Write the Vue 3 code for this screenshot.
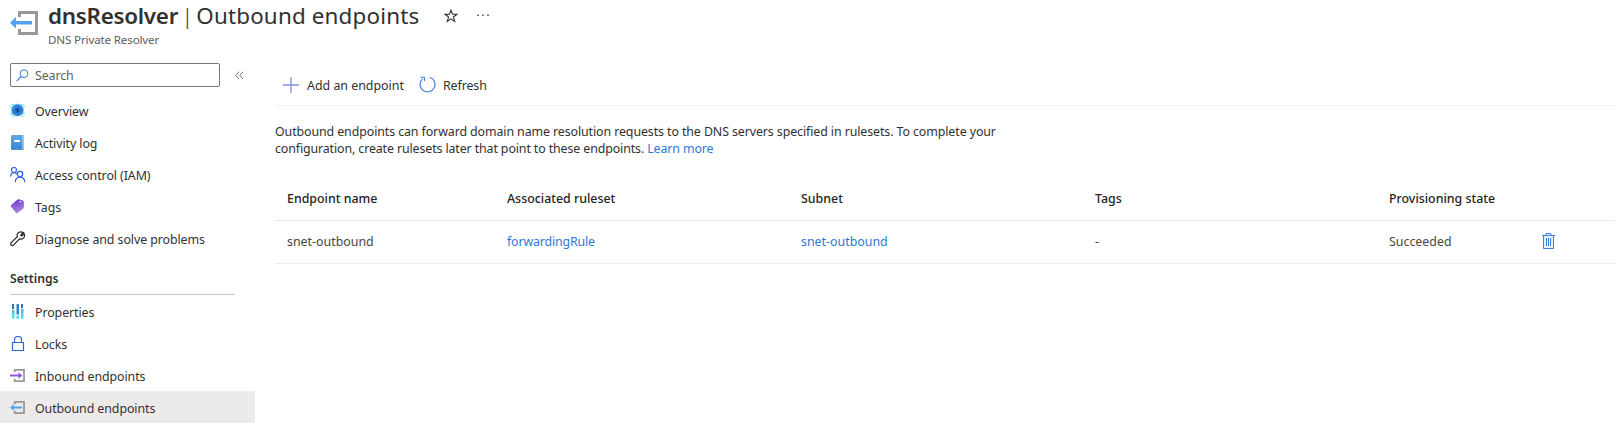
<script setup>
const menu = [
  { id: 'overview', label: 'Overview' },
  { id: 'log', label: 'Activity log' },
  { id: 'iam', label: 'Access control (IAM)' },
  { id: 'tags', label: 'Tags' },
  { id: 'diagnose', label: 'Diagnose and solve problems' },
]
const settings = [
  { id: 'properties', label: 'Properties' },
  { id: 'locks', label: 'Locks' },
  { id: 'inbound', label: 'Inbound endpoints' },
  { id: 'outbound', label: 'Outbound endpoints', active: true },
]
const columns = [
  { id: 'name', label: 'Endpoint name' },
  { id: 'ruleset', label: 'Associated ruleset' },
  { id: 'subnet', label: 'Subnet' },
  { id: 'tagcol', label: 'Tags' },
  { id: 'state', label: 'Provisioning state' },
]
</script>

<template>
  <div class="page">
    <header class="head">
      <svg class="logo" width="30" height="26" viewBox="0 0 30 26">
        <path d="M9.500 7V2.500H26.500V23.500H9.500V19" fill="none" stroke="#999" stroke-width="3" />
        <path d="M0 12.800L6 7V11H22V14.600H6V18.600Z" fill="#50a3f0" />
      </svg>
      <div class="titles">
        <div class="title-row">
          <h1><b>dnsResolver</b><span class="bar">|</span><span class="sub">Outbound endpoints</span></h1>
          <svg class="star" width="14" height="14" viewBox="0 0 14 14">
            <path d="M7 1.200L8.500 5.300H12.900L9.400 8L10.700 12.400L7 9.800L3.300 12.400L4.600 8L1.100 5.300H5.500Z" fill="none" stroke="#333" stroke-width="1.100" />
          </svg>
          <svg class="more" width="12" height="3" viewBox="0 0 12 3">
            <path d="M0 .5h2v1.500H0zM5 .5h2v1.500H5zM10 .5h2v1.500H10z" fill="#777" />
          </svg>
        </div>
        <div class="kind">DNS Private Resolver</div>
      </div>
    </header>
    <div class="body">
      <aside>
        <div class="search-row">
          <div class="search">
            <svg width="13" height="13" viewBox="0 0 13 13">
              <circle cx="8" cy="4.700" r="3.900" fill="none" stroke="#3a7ddb" />
              <path d="M5.200 7.500L.6 12.200" stroke="#3a7ddb" stroke-width="1.200" />
            </svg>
            <span>Search</span>
          </div>
          <svg class="collapse" width="9" height="9" viewBox="0 0 9 9">
            <path d="M4 .7L.8 4.400L4 8.100M8 .7L4.800 4.400L8 8.100" fill="none" stroke="#777" />
          </svg>
        </div>
        <div v-for="(group, g) in [menu, settings]" :key="g" :class="{ settings: g === 1 }">
          <div v-if="g === 1" class="section">Settings</div>
          <div v-for="item in group" :key="item.id" class="item" :class="{ active: item.active }">
            <svg width="16" height="16" viewBox="0 0 16 16">
              <g v-if="item.id === 'overview'">
                <circle cx="7.500" cy="7" r="6.600" fill="#a5edf8" />
                <path d="M1 5V1.500H4.500M11 1.500H14V4.500M1 9.500V13H4.500M11 13H14V9.500" fill="none" stroke="#5fe3f7" stroke-width="1.200" stroke-dasharray="2.500 1.500" />
                <circle cx="7.500" cy="7.200" r="5.900" fill="#2f80d6" />
                <circle cx="7.500" cy="7.200" r="3.400" fill="#1f67bf" stroke="#4a9be6" stroke-width=".5" />
                <path d="M7.500 5.700v3" stroke="#0a326e" stroke-width="1.500" />
              </g>
              <g v-else-if="item.id === 'log'">
                <rect x="1" y="0" width="13" height="15" rx="1.500" fill="#8598aa" />
                <rect x="2" y="1" width="11.500" height="13" rx=".5" fill="#d7e7f5" />
                <rect x="1" y=".5" width="11.500" height="14" rx="1" fill="url(#book)" />
                <rect x="4" y="5" width="6" height="2" fill="#fff" />
                <defs><linearGradient id="book" x2="0" y2="1"><stop stop-color="#5aa9ee" /><stop offset="1" stop-color="#3689d7" /></linearGradient></defs>
              </g>
              <g v-else-if="item.id === 'iam'" fill="none" stroke="#315fe0" stroke-width="1.200">
                <circle cx="4" cy="3" r="2.500" />
                <path d="M.6 9.500C.6 5.100 5.500 4.600 6.700 7.300" />
                <circle cx="10" cy="7" r="2.700" />
                <path d="M5.300 15C5.300 8.400 14.700 8.400 14.700 15" />
              </g>
              <g v-else-if="item.id === 'tags'">
                <path d="M1.200 6L7.500 .6Q8 .2 8.700 .3L12.600 1.200L13.800 2.800V8.400Q13.800 9 13.300 9.500L7.600 14Q6.900 14.500 6.200 13.900L1.200 8Q.6 6.800 1.200 6Z" fill="url(#tag)" />
                <circle cx="10.500" cy="2.600" r=".9" fill="#eee6ff" />
                <defs><linearGradient id="tag" x2=".3" y2="1"><stop stop-color="#6a2fd0" /><stop offset="1" stop-color="#a885e0" /></linearGradient></defs>
              </g>
              <g v-else-if="item.id === 'diagnose'" fill="none" stroke="#222" stroke-width="1.200">
                <path d="M10.800 4.200L13.300 1.500Q9.700-.2 7.700 2.400Q6.700 4.100 7.400 5.700L1.200 11.600Q.1 13.200 1.300 14.200Q2.600 15 3.700 13.900L9.500 7.900Q12.300 8.800 14 6.500Q14.900 4.800 14 2.500L11.700 4.900Z" />
              </g>
              <g v-else-if="item.id === 'properties'">
                <path d="M2 0h2v5H2zM11 0h2v4h-2z" fill="#2777cc" />
                <path d="M2 6h2.500v9H2zM11 5h2.500v10H11z" fill="url(#bars)" />
                <path d="M6.500 0h2.500v10.500H6.500z" fill="#3680cf" />
                <path d="M6.500 11.500h2.500V15H6.500z" fill="#62daf4" />
                <defs><linearGradient id="bars" x2="0" y2="1"><stop stop-color="#42b7df" /><stop offset="1" stop-color="#66e6fb" /></linearGradient></defs>
              </g>
              <g v-else-if="item.id === 'locks'" fill="none" stroke="#2f66de" stroke-width="1.200">
                <path d="M2.500 6.500H13.500V14.500H2.500ZM4.500 6.500V3.700C4.500-.6 11.500-.6 11.500 3.700V6.500" />
              </g>
              <g v-else-if="item.id === 'inbound'">
                <path d="M4.700 4.300V1.800H14V13.200H4.700V10.700" fill="none" stroke="#999" stroke-width="1.800" />
                <path d="M0 6.500H8.500V4.300L12.300 7.500L8.500 10.700V8.500H0Z" fill="#8e56e5" />
              </g>
              <g v-else>
                <path d="M4.700 4.300V1.800H14V13.200H4.700V10.700" fill="none" stroke="#999" stroke-width="1.800" />
                <path d="M0 7.500L3.700 4.200V6.500H12V8.500H3.700V10.800Z" fill="#50a5f2" />
              </g>
            </svg>
            <span>{{ item.label }}</span>
          </div>
        </div>
      </aside>
      <main>
        <div class="toolbar">
          <svg width="16" height="16" viewBox="0 0 16 16"><path d="M0 8H16M8 0V16" stroke="#7d92de" stroke-width="1.300" /></svg>
          <span class="add">Add an endpoint</span>
          <svg width="17" height="17" viewBox="0 0 17 17">
            <path d="M10.800 1.300A7.500 7.500 0 1 1 3.800 2.600M1.500 1.300H5.500V5" fill="none" stroke="#3e78d8" stroke-width="1.100" />
          </svg>
          <span class="refresh">Refresh</span>
        </div>
        <p>
          Outbound endpoints can forward domain name resolution requests to the DNS servers specified in rulesets. To complete your<br>
          <span class="second">configuration, create rulesets later that point to these endpoints. <a>Learn more</a></span>
        </p>
        <div class="grid header">
          <span v-for="c in columns" :key="c.id">{{ c.label }}</span>
        </div>
        <div class="grid row">
          <span>snet-outbound</span>
          <a class="rule">forwardingRule</a>
          <a>snet-outbound</a>
          <span>-</span>
          <span>Succeeded</span>
          <svg width="13" height="16" viewBox="0 0 13 16">
            <path d="M1.500 3V15.500H11.500V3" fill="#e4effc" stroke="#3b82da" />
            <path d="M0 2.500H13M4 2.500V.5H9V2.500" fill="none" stroke="#3b82da" />
            <path d="M4.500 5V13M6.500 5V13M8.500 5V13" stroke="#3b82da" />
          </svg>
        </div>
      </main>
    </div>
  </div>
</template>

<style>
body { margin: 0; background: #fff; }
</style>

<style scoped>
.page { width: 1615px; height: 430px; overflow: hidden; font: 12.4px/17px "Noto Sans", "Open Sans", sans-serif; color: #323130; white-space: nowrap; }
.head { display: flex; height: 63px; padding-left: 10px; box-sizing: border-box; }
.logo { margin-top: 10px; width: 30px; }
.titles { margin-left: 8px; }
.title-row { display: flex; height: 32px; }
h1 { margin: 0; width: 372px; font-size: 22.4px; line-height: 32px; font-weight: 400; }
b { font-weight: 600; letter-spacing: -.27px; }
.bar { margin: 0 3px 0 3px; font-weight: 300; }
.sub { letter-spacing: .17px; }
.star { margin: 9px 0 0 24px; }
.more { margin: 14px 0 0 19px; }
.kind { font-size: 11.6px; line-height: 15px; letter-spacing: -.15px; color: #605e5c; }
.body { display: flex; }
aside { width: 255px; flex: none; }
.search-row { display: flex; align-items: center; height: 24px; padding: 0 0 8px 10px; }
.search { width: 210px; height: 24px; box-sizing: border-box; border: 1px solid #777; border-radius: 2px; display: flex; align-items: center; padding-left: 5px; color: #605e5c; }
.search span { margin-left: 6px; letter-spacing: -.1px; }
.collapse { margin-left: 15px; }
.item { display: flex; align-items: center; height: 32px; box-sizing: border-box; padding-left: 10px; letter-spacing: -.08px; }
.settings .item { padding-top: 2px; }
.item svg { margin-right: 9px; flex: none; }
.active { background: #edebe9; }
.section { height: 39px; line-height: 48px; margin: 0 20px 0 10px; border-bottom: 1px solid #c8c6c4; font-weight: 600; font-size: 12.2px; }
main { flex: 1; margin-left: 20px; }
.toolbar { display: flex; align-items: center; height: 43px; padding: 1px 0 0 8px; box-sizing: border-box; border-bottom: 1px solid #f3f2f1; }
.add { margin: 0 15px 0 8px; padding-top: 2px; }
.refresh { margin-left: 7px; padding-top: 2px; letter-spacing: -.08px; }
p { margin: 17px 0 0; letter-spacing: -.095px; }
.second { letter-spacing: -.115px; }
a { color: #3078d6; }
.grid { display: grid; grid-template-columns: 220px 294px 294px 294px 153px auto; align-items: center; box-sizing: border-box; padding: 0 0 2px 12px; border-bottom: 1px solid #edebe9; height: 43px; }
.header { margin-top: 21px; padding-bottom: 2px; font-weight: 500; color: #252423; }
.row { color: #484644; }
.rule { letter-spacing: -.16px; }
.row svg { display: block; }
</style>
